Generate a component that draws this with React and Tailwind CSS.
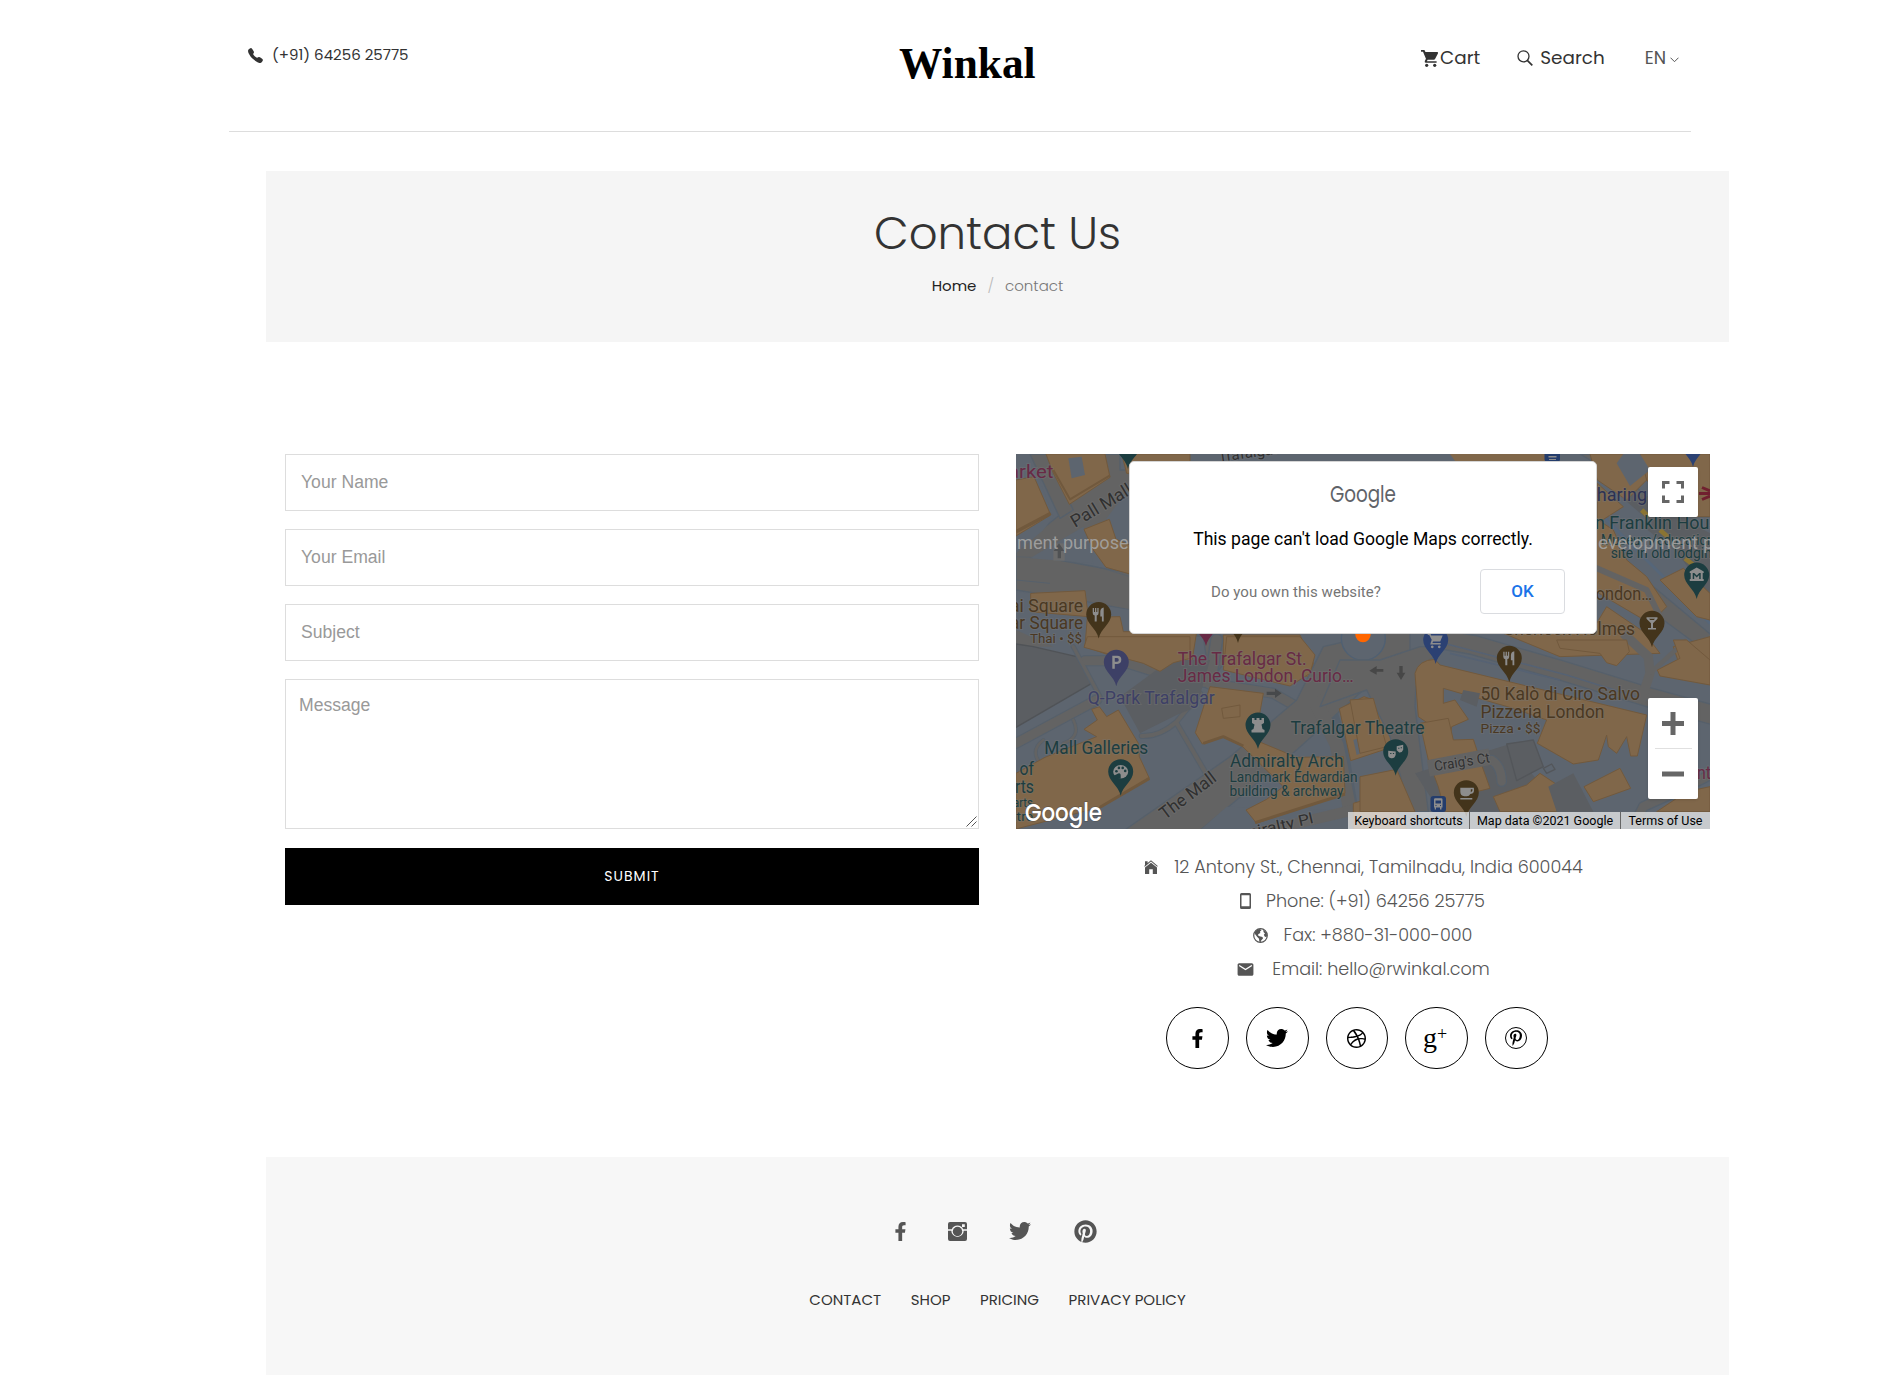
import React from "react";
import { FaFacebookF, FaTwitter, FaPinterest, FaPinterestP } from "react-icons/fa";
import { MdEmail } from "react-icons/md";
import { IoCall } from "react-icons/io5";
import { BsDribbble } from "react-icons/bs";

const C = {
  build: "#80674a",
  edge: "#71593d",
  road: "#636363",
  line: "#56606b",
  gray: "#5b5e62",
  ground: "#5d656f",
  teal: "#1c3d40",
  brown: "#4a3822",
  pin: "#43341b",
  pink: "#682a45",
  indigo: "#3d4066",
  blue: "#2b4173",
};

function Pin({ x, y, fill, children }) {
  return (
    <g transform={`translate(${x} ${y})`}>
      <path d="M0 24C-2 14-12.5 9-12.5 0A12.5 12.5 0 1 1 12.5 0C12.5 9 2 14 0 24Z" fill={fill} />
      <g fill="#8d8d8d" stroke="none">{children}</g>
    </g>
  );
}

function Label({ x, y, w, size = 17.5, fill, rotate = 0, children }) {
  return (
    <text
      x={x}
      y={y}
      textLength={w}
      lengthAdjust="spacingAndGlyphs"
      transform={rotate ? `rotate(${rotate} ${x} ${y})` : undefined}
      fontSize={size}
      fill={fill}
      stroke="#777777"
      strokeOpacity="0.4"
      strokeWidth="2"
      paintOrder="stroke"
    >
      {children}
    </text>
  );
}

const Fork = () => (
  <path d="M-6-6.500h1.300v4h1v-4h1.300v4h1v-4H-.1v5Q-.1.800-2 .9V7h-2V.9Q-6 .8-6-1.500ZM5-7V7H3.200V2H1.600V-3Q1.700-6.500 5-7Z" />
);

function MapDrawing() {
  return (
    <svg width="694" height="375" viewBox="0 0 694 375" className="block font-[Roboto,sans-serif]">
      <rect width="694" height="375" fill={C.ground} />

      {/* upper left */}
      <g transform="translate(-6 -4) scale(.33333)" strokeWidth="4" strokeLinejoin="round">
        <g fill={C.road} stroke={C.line}>
          <path d="M18 12H330V60L560 60 540 180 350 180 200 260 90 320 360 370V480L230 455 18 420V300L180 170Z" />
          <path d="M370 540 650 560 640 640 600 700 580 560Z" />
        </g>
        <path d="M18 12H60L130 200 100 240 18 310Z" fill={C.ground} />
        <path d="M60 12H108L190 180 150 205Z" fill={C.road} stroke={C.line} />
        <path d="M290 205 360 110V300L310 300Z" fill={C.ground} />
        <path d="M18 320 130 325 260 350 360 380" fill="none" stroke={C.line} strokeWidth="2" />
        <path d="M18 390 120 400" fill="none" stroke={C.line} strokeWidth="3" />
        <path d="M60 325 220 230 250 340Z" fill={C.ground} />
        <path d="M18 425 360 480V600H18Z" fill={C.ground} />
        <path d="M18 540 130 590H18Z" fill={C.road} />
        <g fill={C.build} stroke={C.edge} strokeWidth="3">
          <path d="M18 90 72 80 122 195 18 258Z" />
          <path d="M108 12H285L300 82 178 163 128 65Z" />
          <path d="M335 12H540V70H350Z" />
          <path d="M222 238 298 208 318 268 360 285V372L288 352 250 300Z" />
          <path d="M62 430 225 422 235 500 62 485Z" />
          <path d="M232 502 330 500 340 545 560 545 545 640 490 640 450 668 225 590Z" />
          <path d="M640 555 870 555 910 640 900 680 640 640Z" />
        </g>
        <path d="M130 60 180 148 300 76" fill="none" stroke={C.edge} strokeWidth="6" />
        <path d="M175 25 215 20 225 75 185 85Z" fill={C.ground} />
        <path d="M18 245 122 190" fill="none" stroke={C.edge} strokeWidth="10" />
        <path d="M130 280h34v52h-34z" fill="#6b6b6b" />
        <path d="M147 280 163 303H153V325H143V303H131Z" fill="#4f5153" />
      </g>

      {/* upper right */}
      <g transform="translate(344 -4) scale(.33333)" strokeWidth="4" strokeLinejoin="round">
        <path d="M270 12H560V40H290Z" fill={C.build} />
        <g fill={C.road} stroke={C.line}>
          <path d="M690 30 860 200 1050 200 1050 150 860 140 720 12H660Z" />
          <path d="M700 300 760 310 1060 560V620L720 370Z" />
        </g>
        <path d="M700 70 900 240 1050 440 1050 250 960 200Z" fill={C.gray} />
        <path d="M700 170 1050 520" stroke="#566679" strokeWidth="9" fill="none" />
        <g fill={C.build} stroke={C.edge} strokeWidth="3">
          <path d="M690 12H860V90L800 150 712 90Z" />
          <path d="M712 100 790 170 712 220Z" />
          <path d="M840 12H1050V200H960L860 90Z" />
          <path d="M700 200 760 240 800 330 860 380 920 470 870 520 700 420Z" />
          <path d="M900 390 970 355 1050 430V510L1010 500Z" />
          <path d="M430 550 710 520 740 470 850 545 900 610 600 620Z" />
          <path d="M940 590 1050 560V650H960Z" />
        </g>
        <path d="M790 12 840 12 870 60 810 108 770 40Z" fill={C.ground} />
        <path d="M850 230 940 300 1000 230 960 190Z" fill={C.gray} />
        <path d="M845 180 865 200M900 240 925 262M975 325 1000 345" stroke="#8a7433" strokeWidth="14" />
        <path d="M700 350 860 420 900 500" stroke={C.road} strokeWidth="18" fill="none" />
      </g>

      {/* lower left */}
      <g transform="translate(-6 186) scale(.33333)" strokeWidth="4" strokeLinejoin="round">
        <path d="M18 12 70 20 200 50 245 130 18 262Z" fill={C.gray} stroke="#505357" />
        <g fill="none" stroke={C.line} strokeLinecap="round">
          <path d="M18 310 260 180" strokeWidth="34" />
          <path d="M225 62H330L450 100 600 130 790 160 860 200" strokeWidth="34" />
          <path d="M190 20 270 170" strokeWidth="16" />
          <path d="M620 0 600 130" strokeWidth="40" />
          <path d="M395 288Q450 290 500 245L570 160M500 250 585 395" strokeWidth="18" />
          <path d="M190 240Q215 290 160 310M100 300Q60 330 90 370" strokeWidth="12" />
          <path d="M940 150 990 300 1030 540" strokeWidth="40" />
        </g>
        <g fill="none" stroke={C.road} strokeLinecap="round">
          <path d="M18 310 260 180" strokeWidth="27" />
          <path d="M225 62H330L450 100 600 130 790 160 860 200" strokeWidth="27" />
          <path d="M190 20 270 170" strokeWidth="10" />
          <path d="M620 0 600 130" strokeWidth="32" />
          <path d="M395 288Q450 290 500 245L570 160M500 250 585 395" strokeWidth="12" />
          <path d="M190 240Q215 290 160 310M100 300Q60 330 90 370" strokeWidth="8" />
        </g>
        <path d="M330 580 660 350 860 180 940 20 1200 -40 1200 100 1060 150 860 330 560 580Z" fill={C.road} stroke={C.line} />
        <path d="M930 160 1000 310 1050 560H1010L960 320 900 200Z" fill={C.road} />
        <path d="M560 580 650 500 1010 510 1020 580Z" fill={C.ground} />
        <path d="M690 590 1030 510" stroke={C.road} strokeWidth="32" />
        <path d="M480 60H600L560 200 500 225 390 280 330 170Z" fill={C.gray} />
        <circle cx="1060" cy="-5" r="66" fill={C.ground} stroke="#4f6073" />
        <g fill={C.build} stroke={C.edge} strokeWidth="3">
          <path d="M232 -10H540V55L490 68 450 94 400 70 222 22Z" />
          <path d="M650 -10H870L915 45 900 100 840 138 640 90Z" />
          <path d="M222 268 262 240 245 208 268 200 290 230 325 210 385 310 388 350 418 415 270 502 18 567V400L105 352 260 290Z" />
          <path d="M600 140 760 160 735 300 860 352 1000 350 1005 460 740 550 708 510 770 478 820 440 690 312 640 290 577 312 556 278Z" />
          <path d="M988 206 1062 170 1120 190 1150 320 1022 362Z" />
          <path d="M1030 490 1130 460 1190 567H1030Z" />
        </g>
        <path d="M1030 300 1075 285V330L1040 345Z" fill={C.ground} />
        <path d="M270 502 418 415M735 548 1005 462M580 310 640 290 700 318" fill="none" stroke={C.edge} strokeWidth="9" />
        <path d="M635 205 690 195V230L640 235Z" fill="none" stroke={C.edge} strokeWidth="3" />
        <path d="M770 155H795V146L815 160 795 174V165H770Z" fill="#47494b" />
      </g>

      {/* lower right */}
      <g transform="translate(344 186) scale(.33333)" strokeWidth="4" strokeLinejoin="round">
        <path d="M60 60 180 20 260 20 170 90 165 200 205 515H150L90 290 20 150 -120 200 -60 60Z" fill={C.road} stroke={C.line} />
        <path d="M165 400 440 315 550 440 600 515H240Z" fill={C.gray} />
        <path d="M200 -10 340 15 600 90 860 170 1060 225" fill="none" stroke={C.line} strokeWidth="62" />
        <path d="M200 -10 340 15 600 90 860 170 1060 225" fill="none" stroke={C.road} strokeWidth="54" />
        <path d="M260 12 620 105 860 180M270 40 600 120" fill="none" stroke="#566273" strokeWidth="5" />
        <path d="M790 -20 865 50 870 100 840 190" fill="none" stroke={C.road} strokeWidth="28" />
        <path d="M870 100 980 0" fill="none" stroke={C.road} strokeWidth="14" />
        <path d="M1060 400 960 450 850 500 820 560" fill="none" stroke={C.line} strokeWidth="34" />
        <path d="M1060 400 960 450 850 500 820 560" fill="none" stroke={C.road} strokeWidth="26" />
        <g fill={C.build} stroke={C.edge} strokeWidth="3">
          <path d="M165 100Q175 60 225 58L240 75 860 225 832 348 812 348 800 290 770 340 745 320 740 285 715 360 640 372 532 310 560 240 460 205 250 145 250 190 285 180 325 238 275 260 270 295 175 230Z" />
          <path d="M180 250 265 235 280 300 340 298 365 375 390 445 350 455 325 515H255L235 440 205 360Z" />
          <path d="M400 470 500 435 540 400 600 440 590 515H420Z" />
          <path d="M672 440 780 385 812 445 700 485Z" />
          <path d="M590 0H800L808 35 770 77 740 68 720 40 600 25Z" />
          <path d="M892 90 960 55 940 0H980L1050 60V135L900 108Z" />
          <path d="M-30 180 40 175 80 320 0 340Z" />
          <path d="M0 410 110 388 165 515H0Z" />
          <path d="M890 515 980 455 1050 440V515Z" />
        </g>
        <path d="M310 150 360 160 350 200 300 180Z" fill={C.gray} />
        <path d="M440 312 470 422 550 380 520 300Z" fill={C.gray} stroke="#53565a" />
        <path d="M565 440 640 400 700 515H590Z" fill={C.gray} />
        <path d="M550 385 575 372 585 388 560 400Z" fill="none" stroke="#53565a" />
        <path d="M395 360Q425 380 425 425" fill="none" stroke={C.line} strokeWidth="32" strokeLinecap="round" />
        <path d="M395 360Q425 380 425 425" fill="none" stroke={C.road} strokeWidth="25" strokeLinecap="round" />
        <path d="M205 385 390 350" stroke={C.road} strokeWidth="50" />
        <path d="M28 92 50 78V87H70V95H50V104ZM118 78H128V98H136L123 120 110 98H118Z" fill="#474747" />
      </g>

      {/* place labels */}
      <Label x={-8} y={24} w={45.500} fill={C.pink}>arket</Label>
      <Label x={59} y={74} w={68} rotate={-31} fill="#303030">Pall Mall</Label>
      <Label x={203} y={8} w={60} size={15} rotate={-8} fill="#303030">Trafalgar</Label>
      <Label x={-6} y={157.700} w={73} fill={C.brown}>ai Square</Label>
      <Label x={-6} y={175} w={73} fill={C.brown}>ar Square</Label>
      <Label x={14} y={189.300} w={52} size={13} fill={C.brown}>Thai • $$</Label>
      <Label x={71.700} y={250.300} w={127} fill={C.indigo}>Q-Park Trafalgar</Label>
      <Label x={161.700} y={211} w={129} fill={C.pink}>The Trafalgar St.</Label>
      <Label x={161.700} y={228.300} w={176} fill={C.pink}>James London, Curio…</Label>
      <Label x={28.300} y={300} w={104} fill={C.teal}>Mall Galleries</Label>
      <Label x={3.500} y={321} w={14.500} fill={C.teal}>of</Label>
      <Label x={-1} y={338.700} w={19} fill={C.teal}>rts</Label>
      <Label x={-3} y={352.700} w={20} size={13.500} fill={C.teal}>arts</Label>
      <Label x={-7} y={366.700} w={24} size={13.500} fill={C.teal}>ntre</Label>
      <Label x={214} y={313.300} w={113.500} fill={C.teal}>Admiralty Arch</Label>
      <Label x={213.500} y={328.300} w={128} size={14} fill={C.teal}>Landmark Edwardian</Label>
      <Label x={213.500} y={342} w={114} size={14} fill={C.teal}>building &amp; archway</Label>
      <Label x={274.500} y={280.300} w={134} fill={C.teal}>Trafalgar Theatre</Label>
      <Label x={149} y={366} w={66} rotate={-37} fill="#303030">The Mall</Label>
      <Label x={228} y={385} w={72} size={15} rotate={-13} fill="#303030">miralty Pl</Label>
      <Label x={419} y={317} w={56} size={14} rotate={-9} fill="#303030">Craig's Ct</Label>
      <Label x={464.500} y={246.300} w={159.500} fill={C.brown}>50 Kalò di Ciro Salvo</Label>
      <Label x={464.500} y={263.700} w={124} fill={C.brown}>Pizzeria London</Label>
      <Label x={464.500} y={278.700} w={60} size={13.500} fill={C.brown}>Pizza • $$</Label>
      <Label x={569} y={47} w={62} fill="#2c3254">Charing</Label>
      <Label x={579} y={75.300} w={133} fill={C.teal}>n Franklin House</Label>
      <Label x={585} y={91} w={113} size={14} fill={C.teal}>Museum/education</Label>
      <Label x={594.700} y={104.300} w={109} size={14} fill={C.teal}>site in old lodging</Label>
      <Label x={571} y={146} w={65} fill={C.brown}>London…</Label>
      <Label x={488} y={181} w={131} fill={C.brown}>Sherlock Holmes</Label>
      <Label x={681} y={325} w={14} fill={C.pink}>nt</Label>

      <Pin x={82.700} y={160.500} fill={C.pin}><Fork /></Pin>
      <Pin x={112} y={-9} fill={C.teal} />
      <Pin x={190} y={168} fill={C.pink} />
      <Pin x={222} y={165} fill={C.pin} />
      <Pin x={677} y={-11} fill={C.blue} />
      <Pin x={100.300} y={208.300} fill={C.indigo}>
        <path fillRule="evenodd" d="M-4-6.500H1Q5-6.300 5-2.500T1 1.800H-1.500V6.500H-4ZM-1.500-4.200V-.5H.8Q2.500-.8 2.500-2.400T.8-4.200Z" />
      </Pin>
      <Pin x={242} y={271} fill={C.teal}>
        <path d="M-6-7h2.500v2h2v-2h3v2h2v-2H6v5L3.500-.5 4.500 4 6.500 5v2.500h-13V5l2-1 1-4.500L-6-2Z" />
      </Pin>
      <Pin x={104.700} y={317.700} fill={C.teal}>
        <ellipse cx="0" cy="0" rx="7.500" ry="6.800" />
        <g fill={C.teal}>
          <circle cx="-4.300" cy="-.5" r="1.300" />
          <circle cx="-1.800" cy="-3.800" r="1.300" />
          <circle cx="2" cy="-3.800" r="1.300" />
          <circle cx="4.500" cy="-.8" r="1.300" />
          <path d="M-7 7 0 7 0 3Q-1 1-3 2L-7 4Z" />
        </g>
      </Pin>
      <Pin x={379.700} y={297.700} fill={C.teal}>
        <path fillRule="evenodd" d="M-7.500-1 0-.2V3Q-1 7-4.500 6.500T-7.500 2ZM-5.500 1.200v1h1.200v-1ZM-2.800 1.200v1h1.200v-1ZM1-5.500 7.500-7V-2Q6.500 1 3.500 .7L1-1.500ZM2.500-4v1h1.200V-4ZM5-4.500v1h1.200v-1Z" />
      </Pin>
      <Pin x={493.300} y={204.300} fill={C.pin}><Fork /></Pin>
      <Pin x={450.300} y={338.700} fill={C.pin}>
        <path fillRule="evenodd" d="M-6-5H7.500Q9 1 4 1.200 3 3.500.500 3.500H-2Q-6 3-6-1ZM4.500-3.500V-.5Q6.500-.8 6.200-3.500ZM-6 5.200H6V6.800H-6Z" />
      </Pin>
      <Pin x={419.700} y={186} fill={C.blue}>
        <path d="M-8-6.500h2.700l.8 2H7L4.500 1.500H-2.500L-3.300 3H5V4.500H-5.500L-4-.2-6.500-5H-8ZM-3.500 5.500a1.400 1.400 0 1 0 .1 0ZM3.500 5.500a1.400 1.400 0 1 0 .1 0Z" />
      </Pin>
      <Pin x={636} y={169.300} fill={C.pin}>
        <path fillRule="evenodd" d="M-5.500-6H5.500V-4.500L1 0V4.800H4V6.300H-4V4.800H-1V0L-5.500-4.500ZM-3-4.500-1.800-3.200H1.800L3-4.500Z" />
      </Pin>
      <Pin x={680.700} y={121} fill={C.teal}>
        <path fillRule="evenodd" d="M0-7.500 7-3.500V-2H6V4H7V6H-7V4H-6V-2H-7V-3.500ZM-4-2V4H-2.500V0L0 2.500 2.500 0V4H4V-2H2.500L0 .5-2.500-2Z" />
      </Pin>
      <g transform="translate(414.500 342)">
        <rect width="15.500" height="16" rx="3" fill="#243d6c" />
        <path fillRule="evenodd" d="M3.500 3.500q0-1.200 1.200-1.200h6q1.300 0 1.300 1.200v8h-1v2H9.500v-2h-4v2H4.200v-2h-.7ZM5 4.500v3h5.500v-3ZM5 9v1h1V9ZM9.500 9v1h1V9Z" fill="#8d8d8d" />
      </g>
      <g transform="translate(528.500 -8)">
        <rect width="15.500" height="16" rx="3" fill="#243d6c" />
        <path d="M4 10h8v1.500H4ZM4.500 13h7v1h-7z" fill="#8d8d8d" />
      </g>
      <path d="M683 39.500h11M686 33.500 694 37M686 45.500 694 42" stroke="#70202f" strokeWidth="3" />
      <circle cx="347" cy="180.500" r="7.700" fill="#ff6600" />

      {/* watermark */}
      <g fontSize="18.500" fill="#a5a5a5" fillOpacity="0.9">
        <text x="1" y="95" textLength="121" lengthAdjust="spacingAndGlyphs">ment purposes</text>
        <text x="571" y="95" textLength="144" lengthAdjust="spacingAndGlyphs">development pur</text>
      </g>
      <text x="9" y="367" textLength="77" fontSize="25" fontWeight="500" className="font-[Poppins,sans-serif]" fill="#ffffff" stroke="#444444" strokeOpacity="0.4" strokeWidth="1.500" paintOrder="stroke" lengthAdjust="spacingAndGlyphs">
        Google
      </text>
    </svg>
  );
}

function MapPanel() {
  return (
    <div className="relative h-[375px] w-[694px] overflow-hidden font-[Roboto,sans-serif]">
      <MapDrawing />

      <div className="absolute left-[113px] top-[7px] h-[173px] w-[468px] rounded-[5px] border border-[#d5d5d5] bg-white">
        <div className="flex h-full flex-col items-center">
          <svg width="68" height="26" viewBox="0 0 68 26" className="mt-[21px] block font-[Poppins,sans-serif]">
            <text x="1" y="18.500" textLength="66" lengthAdjust="spacingAndGlyphs" fontSize="22.500" fill="#5f6368">Google</text>
          </svg>
          <p className="mt-[18px] text-[17.600px] leading-6 text-black">This page can't load Google Maps correctly.</p>
          <div className="mt-[18px] flex w-full items-center justify-between pl-[81px] pr-[32px]">
            <span className="mt-px text-[15px] tracking-[0.05px] text-[#757575]">Do you own this website?</span>
            <button className="-mr-px h-[45px] w-[85px] rounded-[4px] border border-[#dadce0] pt-px text-[17px] font-medium text-[#1a73e8]">OK</button>
          </div>
        </div>
      </div>

      <button className="absolute left-[632px] top-[13px] flex h-[50px] w-[50px] items-center justify-center rounded-[2px] bg-white shadow">
        <svg width="22" height="22" viewBox="0 0 22 22" fill="none" stroke="#666666" strokeWidth="3">
          <path d="M1.500 7.500V1.500H7.500M14.500 1.500H20.500V7.500M20.500 14.500V20.500H14.500M7.500 20.500H1.500V14.500" />
        </svg>
      </button>

      <div className="absolute left-[632px] top-[244px] flex h-[101px] w-[50px] flex-col items-center rounded-[2px] bg-white shadow">
        <button className="flex h-[50px] items-center justify-center">
          <svg width="22" height="23" viewBox="0 0 22 23" fill="#666666">
            <path d="M8.500 0h5v9H22v5h-8.500v9h-5v-9H0V9h8.500z" />
          </svg>
        </button>
        <div className="h-px w-[37px] bg-[#e0e0e0]" />
        <button className="flex h-[50px] items-center justify-center">
          <svg width="22" height="6" viewBox="0 0 22 6" fill="#666666">
            <path d="M0 .5h22v5H0z" />
          </svg>
        </button>
      </div>

      <div className="absolute bottom-0 right-0 flex h-[17px] items-center divide-x divide-[#666666] bg-[#f5f5f5]/70 text-[12.500px] leading-[17px] text-black">
        <span className="w-[122px] text-center">Keyboard shortcuts</span>
        <span className="w-[151px] text-center">Map data ©2021 Google</span>
        <span className="w-[89px] text-center">Terms of Use</span>
      </div>
    </div>
  );
}

function CartIcon() {
  return (
    <svg width="18" height="17" viewBox="0 0 19 18" fill="#333333">
      <path d="M0 0H3.600L4.700 2.200H17.300Q18.500 2.300 17.900 3.600L15 9.300Q14.500 10.200 13.500 10.200H7L6.200 11.900H16.500V13.600H5Q3.400 13.300 4 11.700L5.200 9.300 2.100 1.800H0Z" />
      <circle cx="6" cy="16.200" r="1.700" />
      <circle cx="14.500" cy="16.200" r="1.700" />
    </svg>
  );
}

function HomeIcon() {
  return (
    <svg width="14" height="14" viewBox="0 0 14 14" fill="#555555">
      <path d="M1 1.200H3.600V3L7 .3 13.800 6 13.200 6.700 7 1.600.8 6.700.2 6 1 5.300Z" />
      <path d="M1 7.500 7 2.700 13 7.500V14H8.800V9.200H5.200V14H1Z" />
    </svg>
  );
}

function PhoneIcon() {
  return (
    <svg width="11" height="16" viewBox="0 0 11 16" fill="#555555">
      <path fillRule="evenodd" d="M1.500 0H9.500Q11 0 11 1.500V14.500Q11 16 9.500 16H1.500Q0 16 0 14.500V1.500Q0 0 1.500 0ZM1.500 2.300V13.300H9.500V2.300Z" />
    </svg>
  );
}

function GlobeIcon() {
  return (
    <svg width="15" height="15" viewBox="0 0 15 15" fill="#555555">
      <circle cx="7.500" cy="7.500" r="6.800" fill="none" stroke="#555555" strokeWidth="1.200" />
      <path d="M1.500 4.500Q3.500 1.200 7 1L8.500 2.200 7 3.500 7.300 5 5.500 6 4.800 7.200 6.500 8.200 9.500 9 10 10.500 8.300 12.300 7.600 14.200 6.300 13.500 6 10.800 4.300 9 2.300 6.500Z" />
      <path d="M10.300 1.400 13.800 5 14 8.500 12 9 10.800 6.800 12 5.500 10.500 4Z" />
    </svg>
  );
}

function InstagramIcon() {
  return (
    <svg width="19" height="19" viewBox="0 0 19 19" fill="#555555">
      <path fillRule="evenodd" d="M2 0H17Q19 0 19 2V7.200H15.200A6.200 6.200 0 0 0 3.800 7.200H0V2Q0 0 2 0ZM14 2.200V5H16.800V2.200Z" />
      <path d="M0 8.700H3.300A6.200 6.200 0 1 0 15.700 8.700H19V17Q19 19 17 19H2Q0 19 0 17Z" />
      <circle cx="9.500" cy="9.500" r="4.700" />
    </svg>
  );
}

function PinterestRing() {
  return (
    <span className="flex h-[22px] w-[22px] items-center justify-center rounded-full border-[1.500px] border-black">
      <FaPinterestP size={16} />
    </span>
  );
}

const fieldClass =
  "h-[57px] w-full border border-[#dddddd] bg-white px-[15px] font-['Liberation_Sans',sans-serif] text-[17.600px] placeholder:text-[#999999]";
const circleClass =
  "flex h-[62px] w-[62.400px] items-center justify-center rounded-full border border-black text-black";

export default function App() {
  return (
    <div className="min-h-[1395px] w-[1899px] bg-white font-[Poppins,Inter,sans-serif] text-[#333333]">
      <header className="ml-[229px] flex h-[132px] w-[1462px] items-start border-b border-[#dddddd] pl-[18px]">
        <div className="mt-[43px] flex w-[652px] items-center gap-[8px] text-[15px] leading-6">
          <IoCall size={17} color="#333333" />
          <span>(+91) 64256 25775</span>
        </div>
        <h1 className="mt-[38px] font-['Liberation_Serif',serif] text-[43.400px] font-bold leading-[50px] text-black">Winkal</h1>
        <nav className="ml-auto mt-[44px] flex items-center pr-[12px] text-[18.400px] leading-7">
          <a className="flex items-center gap-px"><CartIcon />Cart</a>
          <a className="ml-[37px] flex items-center gap-[7px]">
            <svg width="16" height="16" viewBox="0 0 16 16" fill="none" stroke="#333333" strokeWidth="1.300">
              <circle cx="6.500" cy="6.300" r="5.500" />
              <path d="M10.300 10.300 15.300 15.300" strokeWidth="1.700" />
            </svg>
            Search
          </a>
          <a className="ml-[40px] flex items-center gap-[4px] text-[17.500px] text-[#555555]">
            EN
            <svg width="9" height="6" viewBox="0 0 9 6" fill="none" stroke="#555555" strokeWidth="1" className="mt-[3px]">
              <path d="M.5.700 4.500 4.700 8.500.700" />
            </svg>
          </a>
        </nav>
      </header>

      <section className="ml-[266px] mt-[39px] flex h-[171px] w-[1463px] flex-col items-center bg-[#f5f5f5] pt-[35px]">
        <h2 className="text-[45px] font-light leading-[56px]">Contact Us</h2>
        <div className="mt-[12px] flex gap-[11px] text-[15px] leading-6">
          <a className="text-[#222222]">Home</a>
          <span className="font-light text-[#bbbbbb]">/</span>
          <span className="font-light text-[#777777]">contact</span>
        </div>
      </section>

      <main className="ml-[285px] mt-[112px] flex h-[703px] gap-[37px]">
        <form className="flex w-[694px] flex-col gap-[18px]">
          <input className={fieldClass} placeholder="Your Name" />
          <input className={fieldClass} placeholder="Your Email" />
          <input className={fieldClass} placeholder="Subject" />
          <div className="relative h-[150px]">
            <textarea
              className="block h-[150px] w-full resize-none border border-[#dddddd] bg-white px-[13px] pt-[15px] font-['Liberation_Sans',sans-serif] text-[17.600px] leading-5 placeholder:text-[#999999]"
              placeholder="Message"
            />
            <svg width="11" height="11" viewBox="0 0 11 11" className="absolute bottom-[2px] right-[2px]" stroke="#555555" fill="none">
              <path d="M.5 10.500 10.500.5M5.500 10.500 10.500 5.500" />
            </svg>
          </div>
          <button type="button" className="mt-px h-[57px] w-full bg-black text-[14px] tracking-[1px] text-white">SUBMIT</button>
        </form>

        <div className="w-[694px]">
          <MapPanel />
          <ul className="mt-[21px] text-[17.600px] font-light leading-[34px] text-[#555555]">
            <li className="flex items-center justify-center gap-[16px] pl-px"><HomeIcon />12 Antony St., Chennai, Tamilnadu, India 600044</li>
            <li className="flex items-center justify-center gap-[15px] pr-px"><PhoneIcon />Phone: (+91) 64256 25775</li>
            <li className="flex items-center justify-center gap-[16px] pr-px"><GlobeIcon />Fax: +880-31-000-000</li>
            <li className="flex items-center justify-center gap-[17px]"><MdEmail size={19} />Email: hello@rwinkal.com</li>
          </ul>
          <div className="mt-[21px] flex justify-center gap-[17.300px] pr-[12px]">
            <a className={circleClass}><FaFacebookF size={19} /></a>
            <a className={circleClass}><FaTwitter size={22} /></a>
            <a className={circleClass}><BsDribbble size={19} /></a>
            <a className={circleClass}>
              <span className="flex items-start pr-[3px] font-['Liberation_Serif',serif] leading-none">
                <span className="text-[28px] leading-[22px]">g</span>
                <span className="text-[18px] leading-[14px]">+</span>
              </span>
            </a>
            <a className={circleClass}><PinterestRing /></a>
          </div>
        </div>
      </main>

      <footer className="ml-[266px] flex h-[218px] w-[1463px] flex-col items-center bg-[#f7f7f7] pt-[62px]">
        <div className="flex h-6 items-center pr-[8px] text-[#555555]">
          <FaFacebookF size={19} className="-mr-[4px]" />
          <span className="ml-[42px]"><InstagramIcon /></span>
          <FaTwitter size={22} className="ml-[42px]" />
          <FaPinterest size={23} className="ml-[43px]" />
        </div>
        <nav className="mt-[45px] flex gap-[29.600px] text-[15px] leading-6">
          <a>CONTACT</a>
          <a>SHOP</a>
          <a>PRICING</a>
          <a>PRIVACY POLICY</a>
        </nav>
      </footer>
    </div>
  );
}
